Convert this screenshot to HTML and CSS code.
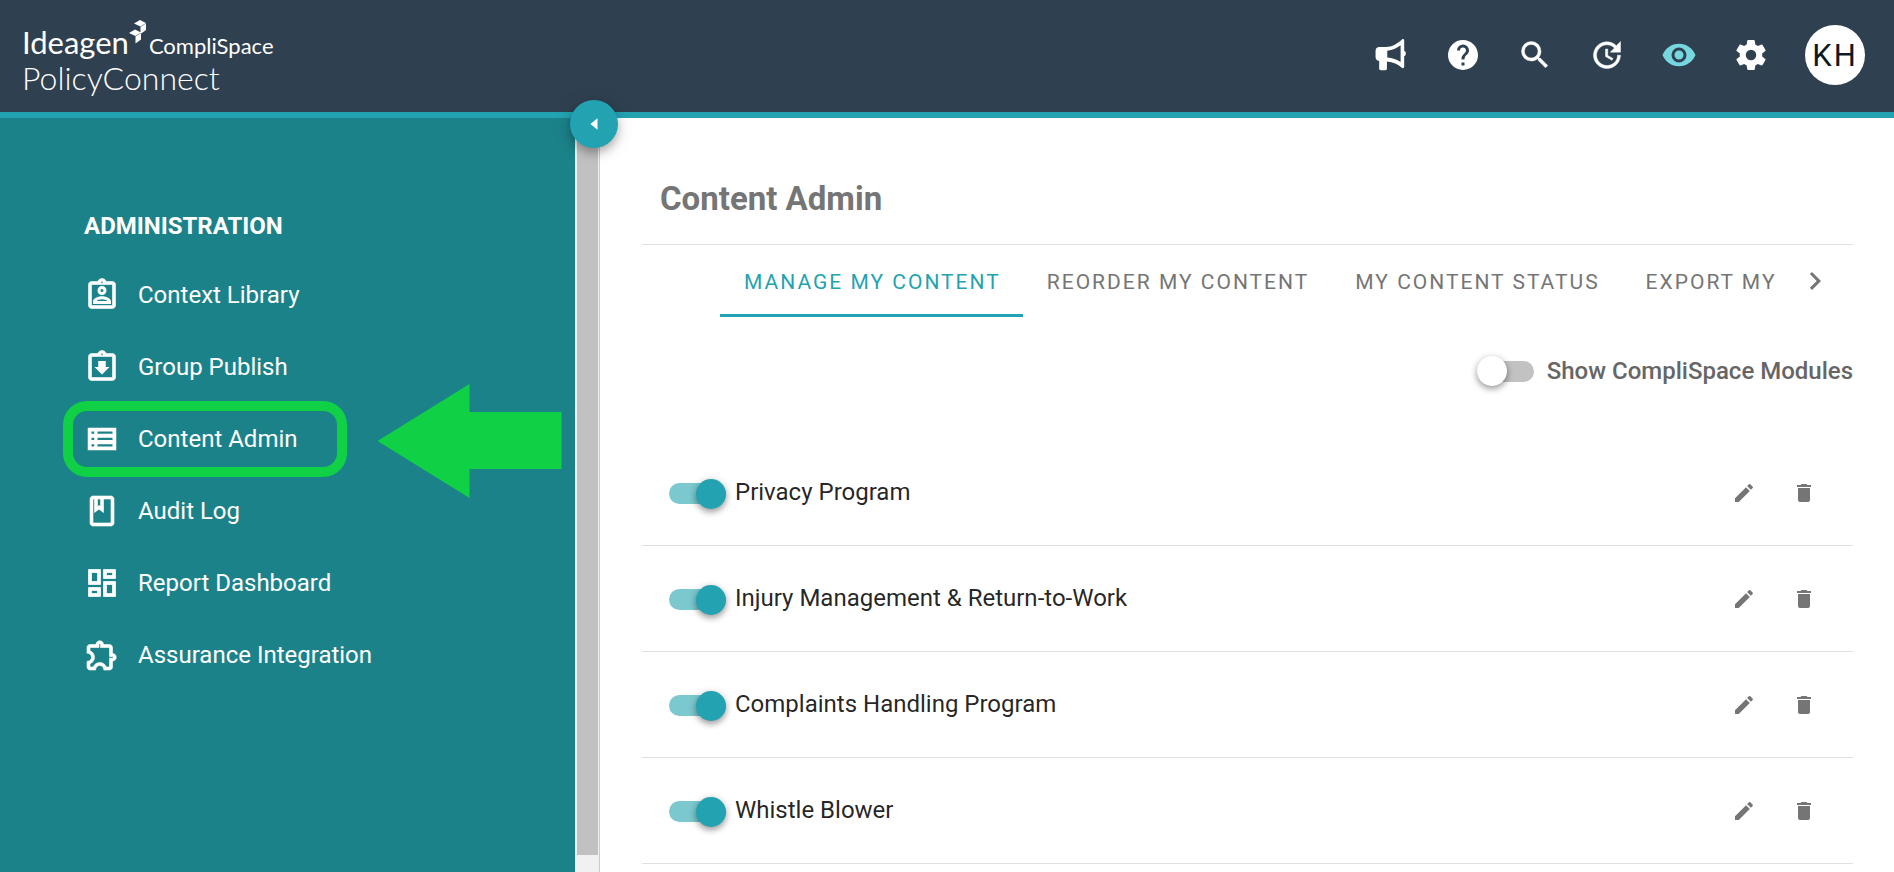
FILE: index.html
```html
<!DOCTYPE html>
<html lang="en">
<head>
    <meta charset="UTF-8">
    <meta name="viewport" content="width=device-width, initial-scale=1.0">
    <title>Content Admin</title>
    <link rel="stylesheet" href="styles.css">
</head>
<body>
    <header class="topbar">
        <a class="brand" href="#">
            <span class="brand-top">
                <span class="brand-name">Ideagen</span>
                <svg class="brand-mark" viewBox="0 0 18 24" aria-hidden="true">
                    <path d="M5 3.500L11 0L17 3L11.500 6.500ZM11.500 7L17 3.500V10L11.500 14ZM0 13L6 9.500L12 12.500L6.500 16ZM6.500 16.500L12 13V19.500L6.500 23.500Z"/>
                </svg>
                <span class="brand-sub">CompliSpace</span>
            </span>
            <span class="brand-product">PolicyConnect</span>
        </a>
        <nav class="tools">
            <button class="tool" aria-label="Announcements">
                <svg viewBox="0 0 24 24"><path fill-rule="evenodd" d="M19.300 1.700C20 1.100 20.800 1.500 20.800 2.400V9.200C21.500 9.500 21.900 10.200 21.900 11S21.500 12.500 20.800 12.800V19.700C20.800 20.700 20 21.100 19.200 20.500C16.500 18.200 13.500 16.800 9.300 16.400V21C9.300 21.700 8.900 22.100 8.200 22.100H5.300C4.600 22.100 4.100 21.700 4.100 21V16C2.600 15.700 1.700 14.700 1.700 13.300V9.300C1.700 7.700 2.700 6.700 4.300 6.700H8.300C13 6.700 16.500 4.300 19.300 1.700ZM18.400 5.500C15.700 7.600 13 8.800 9.500 9.100V13.600C13 13.900 15.800 14.900 18.400 16.700Z"/></svg>
            </button>
            <button class="tool" aria-label="Help">
                <svg viewBox="0 0 24 24"><path d="M15.070,11.250L14.170,12.170C13.450,12.890 13,13.500 13,15H11V14.500C11,13.390 11.450,12.390 12.170,11.670L13.410,10.410C13.780,10.050 14,9.550 14,9C14,7.890 13.100,7 12,7A2,2 0 0,0 10,9H8A4,4 0 0,1 12,5A4,4 0 0,1 16,9C16,9.880 15.640,10.670 15.070,11.250M13,19H11V17H13M12,2A10,10 0 0,0 2,12A10,10 0 0,0 12,22A10,10 0 0,0 22,12C22,6.470 17.500,2 12,2Z"/></svg>
            </button>
            <button class="tool" aria-label="Search">
                <svg viewBox="0 0 24 24"><path stroke="currentColor" stroke-width=".3" d="M9.500,3A6.500,6.500 0 0,1 16,9.500C16,11.110 15.410,12.590 14.440,13.730L14.710,14H15.500L20.500,19L19,20.500L14,15.500V14.710L13.730,14.440C12.590,15.410 11.110,16 9.500,16A6.500,6.500 0 0,1 3,9.500A6.500,6.500 0 0,1 9.500,3M9.500,5C7,5 5,7 5,9.500C5,12 7,14 9.500,14C12,14 14,12 14,9.500C14,7 12,5 9.500,5Z"/></svg>
            </button>
            <button class="tool" aria-label="Recent updates">
                <svg viewBox="0 0 24 24"><path stroke="currentColor" stroke-width=".3" d="M21,10.120H14.220L16.960,7.300C14.230,4.600 9.810,4.500 7.080,7.200C4.350,9.910 4.350,14.280 7.080,17C9.810,19.700 14.230,19.700 16.960,17C18.320,15.650 19,14.080 19,12.100H21C21,14.080 20.120,16.650 18.360,18.390C14.850,21.870 9.150,21.870 5.640,18.390C2.140,14.920 2.110,9.280 5.620,5.810C9.130,2.340 14.760,2.340 18.270,5.810L21,3V10.120M12.500,8V12.250L16,14.330L15.280,15.540L11,13V8H12.500Z"/></svg>
            </button>
            <button class="tool active" aria-label="View mode">
                <svg viewBox="0 0 24 24"><path d="M12,9A3,3 0 0,0 9,12A3,3 0 0,0 12,15A3,3 0 0,0 15,12A3,3 0 0,0 12,9M12,17A5,5 0 0,1 7,12A5,5 0 0,1 12,7A5,5 0 0,1 17,12A5,5 0 0,1 12,17M12,4.500C7,4.500 2.730,7.610 1,12C2.730,16.390 7,19.500 12,19.500C17,19.500 21.270,16.390 23,12C21.270,7.610 17,4.500 12,4.500Z"/></svg>
            </button>
            <button class="tool" aria-label="Settings">
                <svg viewBox="0 0 24 24"><path d="M12,15.500A3.500,3.500 0 0,1 8.500,12A3.500,3.500 0 0,1 12,8.500A3.500,3.500 0 0,1 15.500,12A3.500,3.500 0 0,1 12,15.500M19.430,12.970C19.470,12.650 19.500,12.330 19.500,12C19.500,11.670 19.470,11.340 19.430,11L21.540,9.370C21.730,9.220 21.780,8.950 21.660,8.730L19.660,5.270C19.540,5.050 19.270,4.960 19.050,5.050L16.560,6.050C16.040,5.660 15.500,5.320 14.870,5.070L14.500,2.420C14.460,2.180 14.250,2 14,2H10C9.750,2 9.540,2.180 9.500,2.420L9.130,5.070C8.500,5.320 7.960,5.660 7.440,6.050L4.950,5.050C4.730,4.960 4.460,5.050 4.340,5.270L2.340,8.730C2.210,8.950 2.270,9.220 2.460,9.370L4.570,11C4.530,11.340 4.500,11.670 4.500,12C4.500,12.330 4.530,12.650 4.570,12.970L2.460,14.630C2.270,14.780 2.210,15.050 2.340,15.270L4.340,18.730C4.460,18.950 4.730,19.030 4.950,18.950L7.440,17.940C7.960,18.340 8.500,18.680 9.130,18.930L9.500,21.580C9.540,21.820 9.750,22 10,22H14C14.250,22 14.460,21.820 14.500,21.580L14.870,18.930C15.500,18.670 16.040,18.340 16.560,17.940L19.050,18.950C19.270,19.030 19.540,18.950 19.660,18.730L21.660,15.270C21.780,15.050 21.730,14.780 21.540,14.630L19.430,12.970Z"/></svg>
            </button>
            <button class="avatar">KH</button>
        </nav>
    </header>

    <div class="layout">
        <aside class="sidebar">
            <h2>ADMINISTRATION</h2>
            <ul class="menu">
                <li>
                    <a href="#">
                        <svg viewBox="0 0 24 24"><path stroke="currentColor" stroke-width=".4" fill-rule="evenodd" d="M19 3h-4.180C14.400 1.840 13.300 1 12 1s-2.400.84-2.820 2H5c-1.100 0-2 .9-2 2v14c0 1.100.9 2 2 2h14c1.100 0 2-.9 2-2V5c0-1.100-.9-2-2-2zm-7-.25a.75.75 0 1 1 0 1.500.75.75 0 0 1 0-1.500zM19 19H5V5h14v14z"/><path fill-rule="evenodd" d="M12 6a3 3 0 1 0 0 6 3 3 0 0 0 0-6zm0 2a1 1 0 1 1 0 2 1 1 0 0 1 0-2zM6 16.470V18h12v-1.530c0-2.500-3.970-3.580-6-3.580s-6 1.070-6 3.580zM8.310 16c.69-.56 2.380-1.120 3.690-1.120s3.010.56 3.690 1.120z"/></svg>
                        <span>Context Library</span>
                    </a>
                </li>
                <li>
                    <a href="#">
                        <svg viewBox="0 0 24 24"><path stroke="currentColor" stroke-width=".4" fill-rule="evenodd" d="M19 3h-4.180C14.400 1.840 13.300 1 12 1s-2.400.84-2.820 2H5c-1.100 0-2 .9-2 2v14c0 1.100.9 2 2 2h14c1.100 0 2-.9 2-2V5c0-1.100-.9-2-2-2zm-7-.25a.75.75 0 1 1 0 1.500.75.75 0 0 1 0-1.500zM19 19H5V5h14v14z"/><path d="M14.500 8h-5v4H7l5 5 5-5h-2.500z"/></svg>
                        <span>Group Publish</span>
                    </a>
                </li>
                <li class="current">
                    <a href="#">
                        <svg viewBox="0 0 24 24"><path fill-rule="evenodd" d="M2.500 4.500v15h19v-15zM5 7h1.800v1.500H5zM9 7h10v1.500H9zM5 11.200h1.800v1.500H5zM9 11.200h10v1.500H9zM5 15.500h1.800V17H5zM9 15.500h10V17H9z"/></svg>
                        <span>Content Admin</span>
                    </a>
                    <svg class="pointer" viewBox="0 0 184 114" aria-hidden="true"><path d="M0 57L92 0V28H184V85H92V114Z"/></svg>
                </li>
                <li>
                    <a href="#">
                        <svg viewBox="0 0 24 24"><path stroke="currentColor" stroke-width=".4" fill-rule="evenodd" d="M18 2H6c-1.100 0-2 .9-2 2v16c0 1.100.9 2 2 2h12c1.100 0 2-.9 2-2V4c0-1.100-.9-2-2-2zM9 4h2v5l-1-.75L9 9V4zm9 16H6V4h1v9l3-2.250L13 13V4h5v16z"/></svg>
                        <span>Audit Log</span>
                    </a>
                </li>
                <li>
                    <a href="#">
                        <svg viewBox="0 0 24 24"><path stroke="currentColor" stroke-width=".5" d="M19 5v2h-4V5h4M9 5v6H5V5h4m10 8v6h-4v-6h4M9 17v2H5v-2h4M21 3h-8v6h8V3zM11 3H3v10h8V3zm10 8h-8v10h8V11zm-10 4H3v6h8v-6z"/></svg>
                        <span>Report Dashboard</span>
                    </a>
                </li>
                <li>
                    <a href="#">
                        <svg viewBox="0 0 24 24"><path stroke="currentColor" stroke-width=".4" d="M10.500 4.500c.28 0 .5.22.5.5v2h6v6h2c.28 0 .5.22.5.5s-.22.5-.5.5h-2v6h-2.120c-.68-1.750-2.390-3-4.380-3s-3.700 1.250-4.380 3H4v-2.120c1.750-.68 3-2.390 3-4.380 0-1.990-1.240-3.700-2.990-4.380L4 7h6V5c0-.28.220-.5.500-.5m0-2C9.120 2.500 8 3.620 8 5H4c-1.100 0-1.990.9-1.990 2v3.800h.29c1.490 0 2.700 1.210 2.700 2.700s-1.210 2.700-2.700 2.700H2V20c0 1.100.9 2 2 2h3.800v-.3c0-1.490 1.210-2.700 2.700-2.700s2.700 1.210 2.700 2.700v.3H17c1.100 0 2-.9 2-2v-4c1.380 0 2.500-1.120 2.500-2.500S20.380 11 19 11V7c0-1.100-.9-2-2-2h-4c0-1.380-1.120-2.500-2.500-2.500z"/></svg>
                        <span>Assurance Integration</span>
                    </a>
                </li>
            </ul>
        </aside>
        <div class="scrollbar">
            <div class="thumb"></div>
            <button class="collapse" aria-label="Collapse menu">
                <svg viewBox="0 0 24 24"><path d="M15 7L9 12L15 17Z"/></svg>
            </button>
        </div>

        <main class="content">
            <h1>Content Admin</h1>
            <div class="tabs">
                <div class="tab-list">
                    <button class="tab selected">MANAGE MY CONTENT</button>
                    <button class="tab">REORDER MY CONTENT</button>
                    <button class="tab">MY CONTENT STATUS</button>
                    <button class="tab">EXPORT MY</button>
                </div>
                <button class="next" aria-label="More tabs">
                    <svg viewBox="0 0 24 24"><path d="M8.590,16.580L13.170,12L8.590,7.410L10,6L16,12L10,18L8.590,16.580Z"/></svg>
                </button>
            </div>
            <div class="filter">
                <input class="switch" type="checkbox" id="showModules">
                <label for="showModules">Show CompliSpace Modules</label>
            </div>
            <ul class="modules">
                <li>
                    <input class="switch" type="checkbox" id="privacy" checked>
                    <label for="privacy">Privacy Program</label>
                    <button class="action" aria-label="Edit"><svg viewBox="0 0 24 24"><use href="#pencil"/></svg></button>
                    <button class="action" aria-label="Delete"><svg viewBox="0 0 24 24"><use href="#trash"/></svg></button>
                </li>
                <li>
                    <input class="switch" type="checkbox" id="injury" checked>
                    <label for="injury">Injury Management &amp; Return-to-Work</label>
                    <button class="action" aria-label="Edit"><svg viewBox="0 0 24 24"><use href="#pencil"/></svg></button>
                    <button class="action" aria-label="Delete"><svg viewBox="0 0 24 24"><use href="#trash"/></svg></button>
                </li>
                <li>
                    <input class="switch" type="checkbox" id="complaints" checked>
                    <label for="complaints">Complaints Handling Program</label>
                    <button class="action" aria-label="Edit"><svg viewBox="0 0 24 24"><use href="#pencil"/></svg></button>
                    <button class="action" aria-label="Delete"><svg viewBox="0 0 24 24"><use href="#trash"/></svg></button>
                </li>
                <li>
                    <input class="switch" type="checkbox" id="whistle" checked>
                    <label for="whistle">Whistle Blower</label>
                    <button class="action" aria-label="Edit"><svg viewBox="0 0 24 24"><use href="#pencil"/></svg></button>
                    <button class="action" aria-label="Delete"><svg viewBox="0 0 24 24"><use href="#trash"/></svg></button>
                </li>
            </ul>
        </main>
    </div>

    <svg class="sprite" aria-hidden="true">
        <symbol id="pencil" viewBox="0 0 24 24"><path d="M20.710,7.040C21.100,6.650 21.100,6 20.710,5.630L18.370,3.290C18,2.900 17.350,2.900 16.960,3.290L15.120,5.120L18.870,8.870M3,17.250V21H6.750L17.810,9.930L14.060,6.180L3,17.250Z"/></symbol>
        <symbol id="trash" viewBox="0 0 24 24"><path d="M19,4H15.500L14.500,3H9.500L8.500,4H5V6H19M6,19A2,2 0 0,0 8,21H16A2,2 0 0,0 18,19V7H6V19Z"/></symbol>
    </svg>
</body>
</html>
```

FILE: styles.css
```css
* {
    box-sizing: border-box;
}
body {
    margin: 0;
    height: 100vh;
    display: flex;
    flex-direction: column;
    overflow: hidden;
    font-family: Roboto, sans-serif;
    font-size: 24px;
    background-color: #fff;
    color: rgba(0,0,0,0.87);
}
h1, h2, ul {
    margin: 0;
    padding: 0;
}
ul {
    list-style: none;
}
a {
    color: inherit;
    text-decoration: none;
}
button {
    font-family: inherit;
    padding: 0;
    border: none;
    background: none;
    color: inherit;
    cursor: pointer;
}
svg {
    display: block;
    fill: currentColor;
}
.sprite {
    display: none;
}

/* top bar */
.topbar {
    flex: none;
    display: flex;
    justify-content: space-between;
    align-items: flex-start;
    height: 118px;
    padding: 20px 29px 0 22px;
    background-color: #2f4050;
    border-bottom: 6px solid #23a3b1;
    color: #fff;
}
.brand {
    font-family: Lato, sans-serif;
    display: flex;
    flex-direction: column;
}
.brand-top {
    display: flex;
    align-items: baseline;
    padding-top: 6px;
}
.brand-name {
    font-size: 31px;
    line-height: 32px;
}
.brand-mark {
    align-self: flex-start;
    width: 18px;
    height: 24px;
    margin-top: -6px;
}
.brand-sub {
    margin-left: 2px;
    font-size: 22px;
    line-height: 32px;
}
.brand-product {
    font-size: 32px;
    line-height: 32px;
    font-weight: 300;
}
.tools {
    display: flex;
    align-items: center;
    gap: 36px;
    padding-top: 5px;
}
.tool svg {
    width: 36px;
    height: 36px;
}
.tool.active {
    color: #76d7df;
}
.avatar {
    width: 60px;
    height: 60px;
    border-radius: 50%;
    background-color: #fff;
    color: #0d1a26;
    font-size: 31px;
    letter-spacing: 2px;
}

/* sidebar */
.layout {
    flex: 1;
    display: flex;
    min-height: 0;
}
.sidebar {
    flex: none;
    width: 575px;
    padding: 90px 13px 0 63px;
    background-color: #1c828a;
    color: #fff;
}
.sidebar h2 {
    padding: 0 21px;
    font-size: 24px;
    line-height: 36px;
    font-weight: 700;
}
.menu {
    padding-top: 15px;
}
.menu li {
    display: flex;
    justify-content: space-between;
    align-items: center;
    height: 72px;
}
.menu a {
    display: flex;
    align-items: center;
    gap: 18px;
    padding: 0 21px;
}
.menu a svg {
    width: 36px;
    height: 36px;
}
.menu .current a {
    width: 284px;
    height: 76px;
    padding: 0 11px;
    border: 10px solid #10d146;
    border-radius: 24px;
}
.pointer {
    width: 185px;
    height: 114px;
    margin-top: 4px;
    color: #10d146;
}
.scrollbar {
    flex: none;
    position: relative;
    width: 25px;
    padding: 0 1px 17px 2px;
    background-color: #f1f1f1;
    border-right: 1px solid #ccc;
}
.thumb {
    height: 100%;
    background-color: #c1c1c1;
}
.collapse {
    position: absolute;
    top: -18px;
    left: -5px;
    width: 48px;
    height: 48px;
    display: flex;
    align-items: center;
    justify-content: center;
    border-radius: 50%;
    background-color: #23a3b1;
    color: #fff;
    box-shadow: 0 5px 8px rgba(0,0,0,0.25), 0 2px 20px rgba(0,0,0,0.12);
}
.collapse svg {
    width: 28px;
    height: 28px;
}

/* content */
.content {
    flex: 1;
    min-width: 0;
    padding: 61px 41px 0 42px;
}
h1 {
    padding: 0 18px 25px;
    border-bottom: 1px solid #e0e0e0;
    color: #757575;
    font-size: 33px;
    line-height: 40px;
    font-weight: 700;
}
.tabs {
    display: flex;
    height: 72px;
    padding-left: 78px;
    color: #757575;
}
.tab-list {
    flex: 1;
    display: flex;
    overflow: hidden;
}
.tab {
    flex: none;
    padding: 4px 22px 0 24px;
    border-bottom: 3px solid transparent;
    font-size: 21px;
    font-weight: 400;
    letter-spacing: 2px;
}
.tab.selected {
    border-bottom-color: #23a3b1;
    color: #23a3b1;
}
.next {
    flex: none;
    width: 77px;
    display: flex;
    align-items: center;
    justify-content: center;
}
.next svg {
    width: 36px;
    height: 36px;
}
.filter {
    display: flex;
    align-items: center;
    justify-content: flex-end;
    gap: 13px;
    height: 108px;
    color: #666;
    font-weight: 500;
}
.modules {
    padding-top: 15px;
}
.modules li {
    display: flex;
    align-items: center;
    gap: 9px;
    height: 106px;
    padding: 2px 24px 0 27px;
    border-bottom: 1px solid #e0e0e0;
}
.modules label {
    flex: 1;
    padding-bottom: 3px;
}
.action {
    width: 51px;
    height: 51px;
    padding-bottom: 2px;
    display: flex;
    align-items: center;
    justify-content: center;
    color: #757575;
}
.action svg {
    width: 24px;
    height: 24px;
}
.switch {
    appearance: none;
    flex: none;
    display: flex;
    align-items: center;
    width: 57px;
    height: 21px;
    margin: 0;
    border-radius: 11px;
    background-color: #c2c2c2;
    cursor: pointer;
}
.switch::before {
    content: "";
    flex: none;
    width: 30px;
    height: 30px;
    border-radius: 50%;
    background-color: #fff;
    box-shadow: 0 3px 6px rgba(0,0,0,0.35), 0 1px 10px rgba(0,0,0,0.1);
}
.switch:checked {
    justify-content: flex-end;
    background-color: #7bc8cf;
}
.switch:checked::before {
    background-color: #23a3b1;
}
```
